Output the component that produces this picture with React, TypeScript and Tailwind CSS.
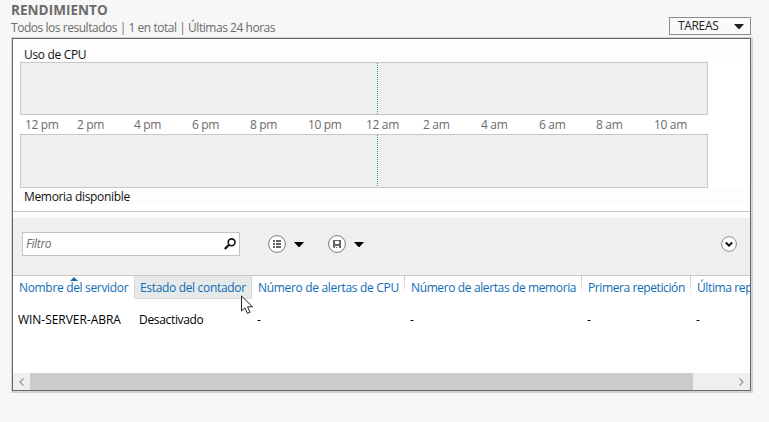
import React from "react";

const Caret = ({ className = "" }: { className?: string }) => (
  <svg viewBox="0 0 10 5" className={`h-[5px] w-2.5 shrink-0 ${className}`}>
    <path d="M0 0H10L5.5 5H4.5Z" fill="currentColor" />
  </svg>
);

const hours = [
  { label: "12 pm", width: "w-[52px]" },
  { label: "2 pm", width: "w-[57px]" },
  { label: "4 pm", width: "w-[58px]" },
  { label: "6 pm", width: "w-[58px]" },
  { label: "8 pm", width: "w-[58px]" },
  { label: "10 pm", width: "w-[58px]" },
  { label: "12 am", width: "w-[57px]" },
  { label: "2 am", width: "w-[58px]" },
  { label: "4 am", width: "w-[58px]" },
  { label: "6 am", width: "w-[57px]" },
  { label: "8 am", width: "w-[58px]" },
  { label: "10 am", width: "w-[50px]" },
];

const columns = [
  { title: "Nombre del servidor", value: "WIN-SERVER-ABRA", width: "w-[121px]", text: "pl-1.5 tracking-[-0.33px]", cell: "pl-[5px] tracking-[-0.04px]", state: "sorted" },
  { title: "Estado del contador", value: "Desactivado", width: "w-[118px]", text: "tracking-[-0.33px]", cell: "pl-[5px] tracking-[-0.33px]", state: "hover" },
  { title: "Número de alertas de CPU", value: "-", width: "w-[153px]", text: "pl-1.5 tracking-[-0.32px]", cell: "pl-[5px]", state: "first" },
  { title: "Número de alertas de memoria", value: "-", width: "w-[177px]", text: "pl-1.5 tracking-[-0.38px]", cell: "pl-[5px]", state: "" },
  { title: "Primera repetición", value: "-", width: "w-[109px]", text: "pl-1.5 tracking-[-0.4px]", cell: "pl-[5px]", state: "" },
  { title: "Última repetición", value: "-", width: "w-[109px]", text: "pl-1.5 tracking-[-0.38px]", cell: "pl-[5px]", state: "" },
];

const Chart = ({ className, marker }: { className: string; marker: string }) => (
  <div className={`ml-[7px] flex w-[688px] border border-[#c8c8c8] bg-[#efefef] ${className}`}>
    <div className={`ml-[356px] h-full w-px ${marker}`} />
  </div>
);

const RoundIcon = ({ children }: { children: React.ReactNode }) => (
  <svg viewBox="0 0 18 18" className="size-[18px] shrink-0">
    <circle cx="9" cy="9" r="8.4" fill="#fff" stroke="#77797b" />
    {children}
  </svg>
);

const Toolbar = () => (
  <div className="flex h-[58px] items-start border-b border-[#c8c8c8] bg-[#efefef] pt-3.5 pl-[9px]">
    <div className="flex h-6 w-[218px] items-center justify-between border border-[#c4c4c4] bg-white px-[3px]">
      <span className="text-[#6b6b6b] italic">Filtro</span>
      <svg viewBox="0 0 12 12" className="size-3" fill="none" stroke="#111">
        <circle cx="7.6" cy="4.3" r="3.4" strokeWidth="1.6" />
        <path d="M5 6.8L.8 11.1" strokeWidth="2.2" />
      </svg>
    </div>
    <div className="mt-[3px] ml-7 flex items-center">
      <RoundIcon>
        <path d="M5 5h2v2H5zM8 5h5v2H8zM5 8h2v2H5zM8 8h5v2H8zM5 11h2v2H5zM8 11h5v2H8z" fill="#62666a" />
      </RoundIcon>
      <Caret className="ml-2" />
      <div className="w-6" />
      <RoundIcon>
        <path d="M5 5h8v8H6l-1-1zM7 6v3h4V6zM7 11v2h1v-1h1v1h2v-2z" fill="#62666a" fillRule="evenodd" />
      </RoundIcon>
      <Caret className="ml-2" />
    </div>
    <svg viewBox="0 0 16 16" className="mt-1 mr-[13px] ml-auto size-4">
      <circle cx="8" cy="8" r="7.4" fill="#fff" stroke="#8b8b8b" />
      <path d="M4.8 6.5L8 9.7l3.2-3.2" fill="none" stroke="#111" strokeWidth="2" />
    </svg>
  </div>
);

export default function App() {
  return (
    <div className="relative h-[422px] w-[769px] overflow-hidden bg-[#f7f7f7] font-['Open_Sans','Noto_Sans',sans-serif] text-[12px] leading-4 tracking-[-0.33px] whitespace-nowrap text-black">
      <header className="flex h-[38px] items-start justify-between pl-[11px]">
        <div className="pt-0.5">
          <h1 className="text-[13.5px] leading-4 font-bold tracking-[0.05px] text-[#6b6b6b]">RENDIMIENTO</h1>
          <p className="pt-0.5 tracking-[-0.46px] text-[#6b6b6b]">Todos los resultados | 1 en total | Últimas 24 horas</p>
        </div>
        <button className="mt-[17px] mr-[18px] flex h-[18px] w-[82px] items-center justify-between border border-[#8c8c8c] bg-[#fafafa] pr-1.5 pl-2 text-[#222]">
          <span>TAREAS</span>
          <Caret />
        </button>
      </header>

      <main className="ml-3 h-[353px] w-[739px] overflow-hidden border border-[#686868] bg-white shadow-[0.5px_0.5px_0_1.5px_#d3d3d3]">
        <section className="h-[173px] border-b border-[#c8c8c8] pt-1">
          <div className="h-[19px] bg-[#fdfdfd] pt-1 pl-[11px] text-[#111]">Uso de CPU</div>
          <Chart
            className="h-[53px]"
            marker="bg-[repeating-linear-gradient(to_bottom,#3b98b8_0px,#3b98b8_1px,#efefef_1px,#efefef_2px)]"
          />
          <div className="flex h-[19px] items-center pl-3 text-[#6b6b6b]">
            {hours.map((h) => (
              <span key={h.label} className={h.width}>{h.label}</span>
            ))}
          </div>
          <Chart
            className="h-[54px]"
            marker="bg-[repeating-linear-gradient(to_bottom,#3b98b8_0px,#3b98b8_1px,#efefef_1px,#efefef_2px)]"
          />
          <div className="h-4 bg-[#fdfdfd] pt-px pl-[11px] text-[#111]">Memoria disponible</div>
        </section>
        <div className="h-1.5 bg-[#fcfcfc]" />
        <Toolbar />
        <section className="flex h-[97px] overflow-hidden">
          {columns.map((c) => (
            <div key={c.title} className={`shrink-0 ${c.width}`}>
              <div className={`relative flex h-[23px] items-center text-[#0f6cb5] ${c.text} ${c.state === "hover" ? "border-x border-b border-[#d6dada] bg-[#e6e9e9] pt-px pl-[5px]" : ""}`}>
                {c.state === "sorted" && (
                  <svg viewBox="0 0 8 4" className="absolute top-px left-[57px] h-1 w-2">
                    <path d="M0 4L4 0l4 4z" fill="#0f6cb5" />
                  </svg>
                )}
                {c.state === "" && (
                  <div className="absolute top-0 left-0 h-5 w-px -translate-x-px bg-linear-to-b from-[#c8c8c8] to-white" />
                )}
                {c.title}
              </div>
              <div className={`pt-[13px] ${c.cell}`}>{c.value}</div>
            </div>
          ))}
        </section>
        <div className="flex h-[17px] bg-[#efefef] text-[#9a9a9a]">
          <div className="flex w-[17px] items-center justify-center">
            <svg viewBox="0 0 5 8" className="h-2 w-[5px]"><path d="M4.5.5L1 4l3.5 3.5" fill="none" stroke="currentColor" strokeWidth="1.4" /></svg>
          </div>
          <div className="w-[663px] bg-[#cbcbcb]" />
          <div className="flex flex-1 items-center justify-end pr-1.5">
            <svg viewBox="0 0 5 8" className="h-2 w-[5px]"><path d="M.5.5L4 4 .5 7.5" fill="none" stroke="currentColor" strokeWidth="1.4" /></svg>
          </div>
        </div>
      </main>

      <svg viewBox="0 0 13 20" className="absolute top-[295px] left-[241px] h-5 w-[13px]">
        <path d="M.5 1v15l3.4-3.2 2.4 5.6 2.7-1.1-2.4-5.5h4.9z" fill="#fff" stroke="#222" />
      </svg>
    </div>
  );
}
